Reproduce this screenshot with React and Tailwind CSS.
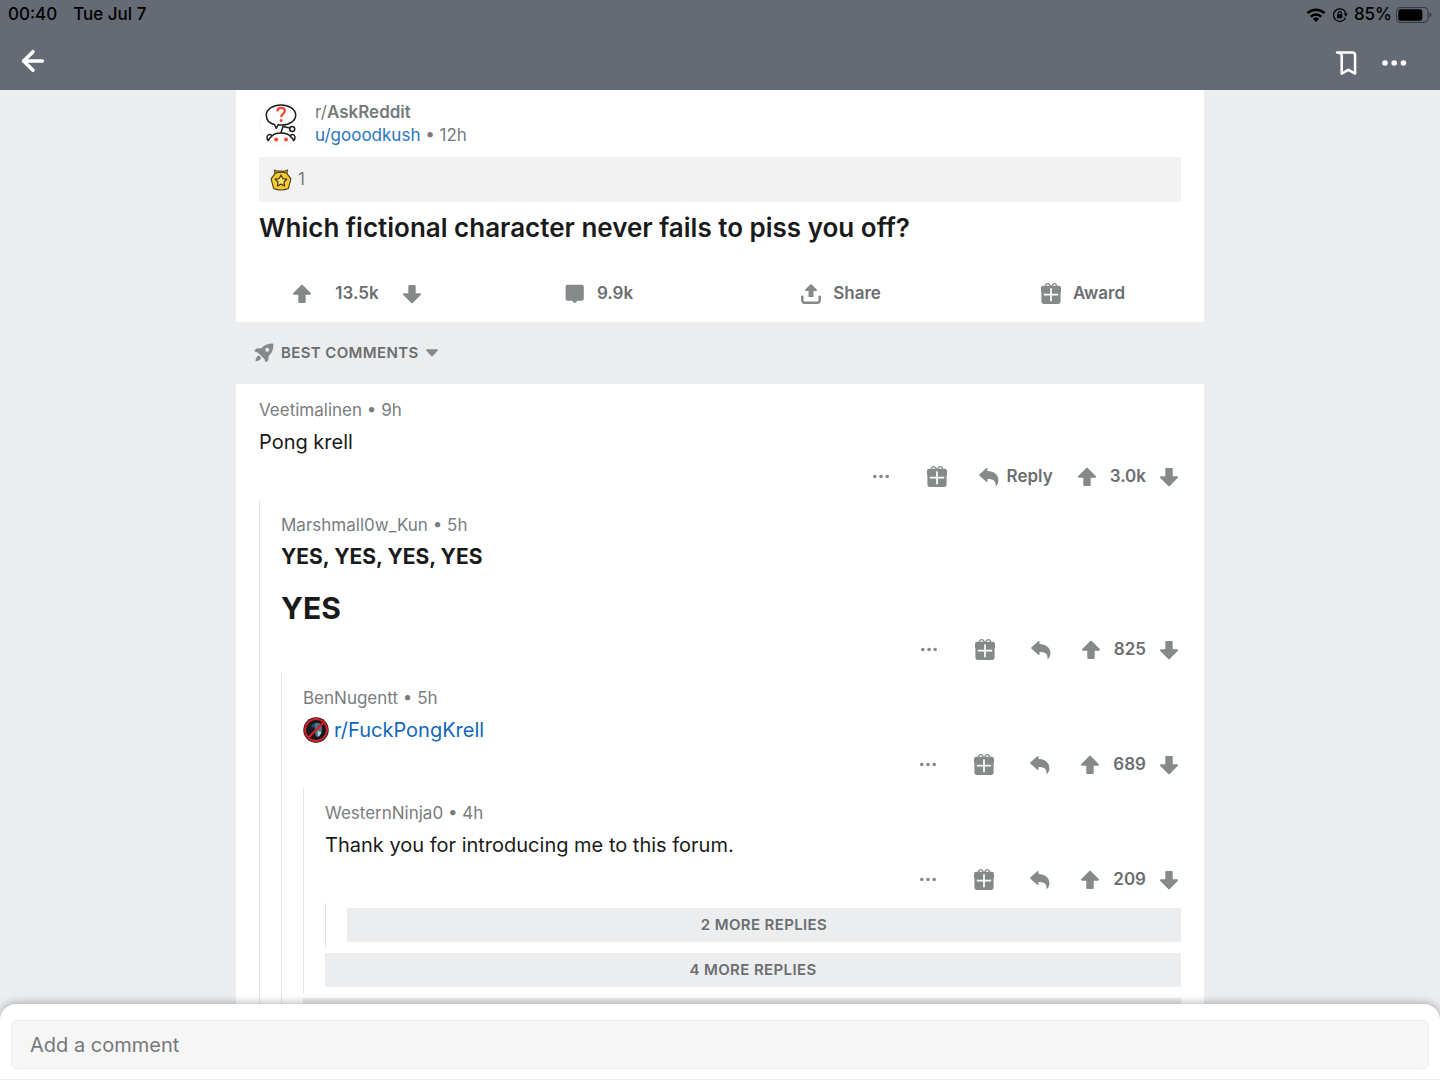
import { ArrowLeft } from 'lucide-react'

const thread = {
  author: 'Veetimalinen',
  age: '9h',
  body: 'Pong krell',
  score: '3.0k',
  showReplyLabel: true,
  replies: [
    {
      author: 'Marshmall0w_Kun',
      age: '5h',
      body: 'YES, YES, YES, YES',
      bold: true,
      heading: 'YES',
      score: '825',
      more: 6,
      replies: [
        {
          author: 'BenNugentt',
          age: '5h',
          community: 'r/FuckPongKrell',
          score: '689',
          more: 4,
          replies: [
            {
              author: 'WesternNinja0',
              age: '4h',
              body: 'Thank you for introducing me to this forum.',
              score: '209',
              more: 2,
            },
          ],
        },
      ],
    },
  ],
}

function UpArrow() {
  return (
    <svg viewBox="0 0 20 20" className="size-5 shrink-0" fill="currentColor" aria-hidden="true">
      <path d="M9.3 0.9a1 1 0 0 1 1.4 0l8 8.2c.6.7.2 1.6-.7 1.6h-4.3v7.3a1 1 0 0 1-1 1H7.3a1 1 0 0 1-1-1v-7.3H2c-.9 0-1.3-.9-.7-1.6z" />
    </svg>
  )
}

function DownArrow() {
  return (
    <svg viewBox="0 0 20 20" className="size-5 shrink-0 rotate-180" fill="currentColor" aria-hidden="true">
      <path d="M9.3 0.9a1 1 0 0 1 1.4 0l8 8.2c.6.7.2 1.6-.7 1.6h-4.3v7.3a1 1 0 0 1-1 1H7.3a1 1 0 0 1-1-1v-7.3H2c-.9 0-1.3-.9-.7-1.6z" />
    </svg>
  )
}

function GiftIcon() {
  return (
    <svg viewBox="0 0 20 22" className="h-[22px] w-5 shrink-0" aria-hidden="true">
      <path d="M9.4 3.4C8.8 1.4 7.6.7 6.5.7 5.100.7 4.200 2 4.500 3.400M10.600 3.400C11.200 1.400 12.400.7 13.500.7c1.400 0 2.300 1.300 2 2.700" fill="none" stroke="currentColor" strokeWidth="1.200" />
      <path d="M2.200 2.700h15.600a2.200 2.200 0 0 1 2.200 2.200v3.400c0 .5-.2.900-.4 1.200v8.800a2.600 2.600 0 0 1-2.600 2.600H3a2.600 2.600 0 0 1-2.600-2.600V9.500C.2 9.200 0 8.800 0 8.300V4.900a2.200 2.200 0 0 1 2.200-2.200z" fill="currentColor" />
      <path d="M10 5.200v13M2.800 11.700h14.400" stroke="#fff" strokeWidth="1.700" />
    </svg>
  )
}

function ReplyIcon() {
  return (
    <svg viewBox="0 0 20 20" className="size-5 shrink-0" fill="currentColor" aria-hidden="true">
      <path d="M.5 7.300 7.300 1.300c.6-.5 1.200-.2 1.200.5v2.300c6.300 0 10.700 3.500 10.900 8.900.1 2.300-.8 4.400-1.900 5.600-.5.500-1.200.2-1.100-.4.500-4.200-2.200-6.300-7.900-6.300v2.400c0 .7-.6 1-1.200.5L.5 8.700a1 1 0 0 1 0-1.400z" />
    </svg>
  )
}

function SmallDots() {
  return (
    <svg viewBox="0 0 20 20" className="size-5 shrink-0" fill="currentColor" aria-hidden="true">
      <circle cx="3.800" cy="9.500" r="1.800" />
      <circle cx="10" cy="9.500" r="1.800" />
      <circle cx="16.200" cy="9.500" r="1.800" />
    </svg>
  )
}

function CommentIcon() {
  return (
    <svg viewBox="0 0 20 20" className="size-5 shrink-0" fill="currentColor" aria-hidden="true">
      <path d="M2.600.8h14.200a2 2 0 0 1 2 2v12a2 2 0 0 1-2 2h-4.400l-2 1.900a1 1 0 0 1-1.400 0l-2-1.900H2.600a2 2 0 0 1-2-2v-12a2 2 0 0 1 2-2z" />
    </svg>
  )
}

function ShareIcon() {
  return (
    <svg viewBox="0 0 20 20" className="size-5 shrink-0" fill="currentColor" aria-hidden="true">
      <path d="M9.300.4a1 1 0 0 1 1.400 0l5 5.200c.5.600.2 1.300-.5 1.300h-2.700v5.300a.9.900 0 0 1-.9.900H8.400a.9.900 0 0 1-.9-.9V6.900H4.800c-.7 0-1-.7-.5-1.300z" />
      <path d="M1.300 12.800v3.700a2.200 2.200 0 0 0 2.200 2.200h13a2.200 2.200 0 0 0 2.200-2.200v-3.700" fill="none" stroke="currentColor" strokeWidth="2.500" strokeLinecap="round" />
    </svg>
  )
}

function RocketIcon() {
  return (
    <svg viewBox="0 0 20 20" className="size-5 shrink-0" fill="currentColor" aria-hidden="true">
      <path fillRule="evenodd" d="M19.400 1.400c0 4.300-1 7.600-3.300 10.200-.4.500-.9.900-1.400 1.300l-.4 3.900c-.1.600-.4 1-.9 1.400l-1.300.9c-.4.200-.8.100-.9-.4l-.8-2.700-6.600-6.600-2.900-.8c-.4-.1-.6-.5-.4-.9l.9-1.300c.3-.5.800-.8 1.400-.9l4.500-.3C10 2.300 13.600.7 18.600.6c.5 0 .8.300.8.800zM13.200 4.800a2 2 0 1 0 0 4 2 2 0 0 0 0-4z" />
      <path d="M3.400 13.300c1-.8 2.200-.6 2.900.1.700.8.800 2 0 2.900-.9.900-2.400 1.800-4.300 2-.3 0-.5-.2-.5-.5.200-1.900.9-3.600 1.900-4.500z" />
    </svg>
  )
}

function AwardMedal() {
  return (
    <svg viewBox="0 0 22 22" className="size-[22px] shrink-0" aria-hidden="true">
      <path d="M4.300.9 7.500 2h7L17.700.9l-.8 3.600H5.100z" fill="#c9a227" stroke="#4a3b12" strokeWidth=".9" strokeLinejoin="round" />
      <path d="M5.400 4.100c3.600-1.300 7.600-1.300 11.200 0l4.300 5.700-2.500 9.600c-4.600 1.900-10.200 1.900-14.800 0L1.100 9.800z" fill="#f4c933" stroke="#4a3b12" strokeWidth="1.100" strokeLinejoin="round" />
      <path d="m11 6 1.800 3.600 4 .6-2.900 2.800.7 4-3.600-1.900L7.400 17l.7-4-2.900-2.800 4-.6z" fill="#ffe36b" stroke="#4a3b12" strokeWidth="1.200" strokeLinejoin="round" />
    </svg>
  )
}

function CommunityAvatar() {
  return (
    <svg viewBox="0 0 44 44" className="size-11 shrink-0" aria-hidden="true">
      <circle cx="22" cy="22" r="21.500" fill="#fff" stroke="#f5f1f3" />
      <g fill="none" stroke="#1c1c1c" strokeWidth="1.500" strokeLinejoin="round">
        <path d="M15.500 22.500C10.500 21.300 7.300 17.700 7.300 13.200 7.300 7.400 13.800 3 22 3s14.700 4.400 14.700 10.200S30.200 23 22 23c-1 0-2-.1-2.900-.2L17.200 26.300z" />
        <path d="M21.800 31.300 24 24.600l6.800 1.500" />
        <circle cx="33.200" cy="26.900" r="2.500" />
        <path d="M12.300 34.200c2.200-2 5.600-3.200 9.700-3.200s7.500 1.200 9.700 3.200" />
        <path d="M9.200 38.600c-2.300-2.600-1.100-6 1.300-6 1.200 0 2 .6 2.400 1.500-1.600 1.200-2.900 2.700-3.700 4.500zM34.800 38.600c2.300-2.600 1.100-6-1.300-6-1.200 0-2 .6-2.400 1.500 1.600 1.200 2.900 2.700 3.700 4.500z" />
      </g>
      <path d="M18.300 9.300c.2-2.200 1.700-3.400 3.800-3.400s3.700 1.200 3.700 3.100c0 2.800-3.600 2.900-3.600 6" fill="none" stroke="#f04a32" strokeWidth="2.300" />
      <circle cx="22.200" cy="18.500" r="1.500" fill="#f04a32" />
      <circle cx="17.200" cy="37.600" r="2" fill="#f04a32" />
      <circle cx="27" cy="37.600" r="2" fill="#f04a32" />
    </svg>
  )
}

function BannedAvatar() {
  return (
    <svg viewBox="0 0 26 26" className="size-[26px] shrink-0" aria-hidden="true">
      <circle cx="13" cy="13" r="12.700" fill="#15181c" />
      <path d="M11 6.500c4-2 7.500 0 8 4 .4 3.500-.8 7.500-4.300 9.500-2-.8-2.700-2.500-2.500-4.500z" fill="#4d7585" />
      <path d="M14.500 14.500c1.700-.6 3.300-.2 3.800.8-.5 2-1.700 3.700-3.300 4.500z" fill="#a8ccd6" />
      <path d="M8 9.500c.6-2 2.500-3 4-2.500L10 11z" fill="#33505e" />
      <circle cx="13" cy="13" r="11" fill="none" stroke="#d6202a" strokeWidth="1.900" />
      <path d="M5.500 20.500 20.500 5.500" stroke="#d6202a" strokeWidth="2.200" />
    </svg>
  )
}

function StatusBar() {
  return (
    <div className="flex h-7 items-center justify-between px-2 pt-px text-[17px] font-medium text-black">
      <div className="flex gap-4">
        <span>00:40</span>
        <span>Tue Jul 7</span>
      </div>
      <div className="flex items-center">
        <svg viewBox="0 0 20 14" className="mr-[6px] h-[14px] w-5" aria-hidden="true">
          <path d="M1.500 5.200a12.200 12.200 0 0 1 17 0M4.700 8.600a7.600 7.600 0 0 1 10.600 0" fill="none" stroke="#000" strokeWidth="2.500" />
          <path d="M10 14 6.800 10.700a4.600 4.600 0 0 1 6.400 0z" />
        </svg>
        <svg viewBox="0 0 16 16" className="mr-[6px] size-4" aria-hidden="true">
          <path d="M13.500 10.800A6.300 6.300 0 1 1 13.800 6.200" fill="none" stroke="#000" strokeWidth="1.300" />
          <path d="M11.600 6.600H16l-2.200 3.100z" />
          <rect x="5" y="7.200" width="5.400" height="4" rx=".6" />
          <path d="M6.100 7.500V6.200a1.600 1.600 0 0 1 3.200 0v1.300" fill="none" stroke="#000" strokeWidth="1.100" />
        </svg>
        <span className="mr-1">85%</span>
        <svg viewBox="0 0 36 16" className="h-4 w-9" aria-hidden="true">
          <rect x=".6" y=".6" width="31.500" height="14.800" rx="4" fill="none" stroke="#30353a" strokeWidth="1" />
          <rect x="2.300" y="2.300" width="24" height="11.400" rx="2.500" />
          <path d="M33.600 5.500c1.200.4 1.800 1.300 1.800 2.500s-.6 2.100-1.800 2.500z" fill="#30353a" />
        </svg>
      </div>
    </div>
  )
}

function NavBar() {
  return (
    <div className="flex h-[62px] items-center justify-between px-[17px] pt-1 text-white">
      <button aria-label="Back" className="cursor-pointer">
        <ArrowLeft className="size-8" strokeWidth={2.7} />
      </button>
      <div className="flex items-center gap-6 pt-1 pr-4">
        <button aria-label="Save" className="cursor-pointer">
          <svg viewBox="0 0 22 26" className="h-[26px] w-[22px]" fill="none" stroke="currentColor" strokeWidth="2.500" strokeLinejoin="round" strokeLinecap="round" aria-hidden="true">
            <path d="M2 2.600h15.300c1.800 0 2.800 1 2.800 2.800v18.200l-6.700-3.800-6.700 3.800V5.400C6.700 3.700 5 2.600 2 2.600" />
          </svg>
        </button>
        <button aria-label="More options" className="cursor-pointer">
          <svg viewBox="0 0 26 26" className="size-[26px]" fill="currentColor" aria-hidden="true">
            <circle cx="4" cy="13" r="2.800" />
            <circle cx="13.200" cy="13" r="2.800" />
            <circle cx="22.400" cy="13" r="2.800" />
          </svg>
        </button>
      </div>
    </div>
  )
}

function Votes({ score, wide }) {
  return (
    <div className={wide ? 'flex items-center gap-[23px]' : 'flex items-center gap-[13px]'}>
      <button aria-label="Upvote" className="cursor-pointer text-[#868989]">
        <UpArrow />
      </button>
      <span>{score}</span>
      <button aria-label="Downvote" className="cursor-pointer text-[#868989]">
        <DownArrow />
      </button>
    </div>
  )
}

function PostAction({ icon, label }) {
  return (
    <button className="flex cursor-pointer items-center gap-3">
      <span className="text-[#868989]">{icon}</span>
      {label}
    </button>
  )
}

function Post() {
  return (
    <article className="bg-white pt-[11px] pb-3">
      <div className="px-[23px]">
        <div className="flex items-center gap-3 text-[17px] leading-[23px] text-[#777a7c]">
          <CommunityAvatar />
          <div>
            <div>
              r/<span className="font-semibold">AskReddit</span>
            </div>
            <div>
              <a href="#user" className="text-[#2a74c0]">u/gooodkush</a> • 12h
            </div>
          </div>
        </div>
        <div className="mt-[10px] flex h-[45px] items-center gap-[6px] bg-[#f2f2f2] px-[11px] text-[17px] text-[#777a7c]">
          <AwardMedal />
          <span>1</span>
        </div>
        <h1 className="mt-[10px] text-[26px] leading-8 font-semibold text-[#1a1a1b]">
          Which fictional character never fails to piss you off?
        </h1>
      </div>
      <div className="mt-[34px] grid h-8 grid-cols-4 items-center justify-items-center text-[17px] font-semibold text-[#6b6e70]">
        <Votes score="13.5k" wide />
        <PostAction icon={<CommentIcon />} label="9.9k" />
        <PostAction icon={<ShareIcon />} label="Share" />
        <PostAction icon={<GiftIcon />} label="Award" />
      </div>
    </article>
  )
}

function CommentActions({ score, showReplyLabel }) {
  return (
    <div className="mt-[6px] flex h-8 items-center justify-end pr-[2px] text-[17px] font-semibold text-[#6b6e70]">
      <button aria-label="More" className="mr-9 cursor-pointer text-[#868989]">
        <SmallDots />
      </button>
      <button aria-label="Give award" className={showReplyLabel ? 'mr-8 cursor-pointer text-[#868989]' : 'mr-9 cursor-pointer text-[#868989]'}>
        <GiftIcon />
      </button>
      <button aria-label="Reply" className={showReplyLabel ? 'mr-6 flex cursor-pointer items-center gap-2' : 'mr-[30px] cursor-pointer'}>
        <span className="text-[#868989]">
          <ReplyIcon />
        </span>
        {showReplyLabel && 'Reply'}
      </button>
      <Votes score={score} />
    </div>
  )
}

function MoreReplies({ count }) {
  return (
    <div className="pt-[5px] pb-[6px]">
      <button className="h-[34px] w-full cursor-pointer bg-[#ecedef] text-[15px] font-semibold tracking-wide text-[#6b6e70]">
        {count} MORE REPLIES
      </button>
    </div>
  )
}

function Comment({ comment }) {
  const { author, age, body, bold, heading, community, score, showReplyLabel, replies = [], more } = comment
  return (
    <div>
      <div className="pt-[13px] pb-[7px]">
        <div className="text-[17px] leading-6 text-[#7a7d7f]">
          {author} • {age}
        </div>
        <div className="mt-[7px] text-[20px] leading-[26px] text-[#1a1a1b]">
          {body && <p className={bold ? 'text-[21px] font-bold' : ''}>{body}</p>}
          {community && (
            <a href="#community" className="flex items-center gap-[5px] text-[#1268bd]">
              <BannedAvatar />
              {community}
            </a>
          )}
        </div>
        {heading && <h2 className="mt-[18px] text-[30px] leading-10 font-bold text-[#1a1a1b]">{heading}</h2>}
        <CommentActions score={score} showReplyLabel={showReplyLabel} />
      </div>
      {(replies.length > 0 || more) && (
        <div className="border-l border-[#e4e5e7] pl-[21px]">
          {replies.map((reply) => (
            <Comment key={reply.author} comment={reply} />
          ))}
          {more && <MoreReplies count={more} />}
        </div>
      )}
    </div>
  )
}

export default function App() {
  return (
    <div className="flex h-screen flex-col bg-[#ecedef] font-['Inter',sans-serif]">
      <header className="shrink-0 bg-[#646b74]">
        <StatusBar />
        <NavBar />
      </header>

      <main className="min-h-0 flex-1 overflow-y-auto [scrollbar-width:none]">
        <div className="mx-auto w-full max-w-[968px]">
          <Post />
          <div className="flex h-[62px] items-center pl-[18px]">
            <button className="flex cursor-pointer items-center gap-[7px] text-[15px] font-semibold tracking-wide text-[#6b6e70]">
              <span className="text-[#868989]">
                <RocketIcon />
              </span>
              BEST COMMENTS
              <svg viewBox="0 0 12 8" className="h-2 w-3 text-[#868989]" fill="currentColor" aria-hidden="true">
                <path d="M1 .3h10c.9 0 1.200.8.6 1.400L6.800 7a1.100 1.100 0 0 1-1.600 0L.4 1.700C-.2 1.100.1.300 1 .3z" />
              </svg>
            </button>
          </div>
          <section className="bg-white px-[23px] pt-px pb-6">
            <Comment comment={thread} />
          </section>
        </div>
      </main>

      <footer className="relative z-10 shrink-0 rounded-t-2xl border-b border-[#ececec] bg-white px-[11px] pt-4 pb-[10px] shadow-[0_-1px_8px_rgba(0,0,0,0.3)]">
        <input
          type="text"
          aria-label="Add a comment"
          placeholder="Add a comment"
          className="block h-[49px] w-full rounded-md border border-[#ececec] bg-[#f6f6f6] px-[18px] text-[20px] outline-none placeholder:text-[#75787a]"
        />
      </footer>
    </div>
  )
}
